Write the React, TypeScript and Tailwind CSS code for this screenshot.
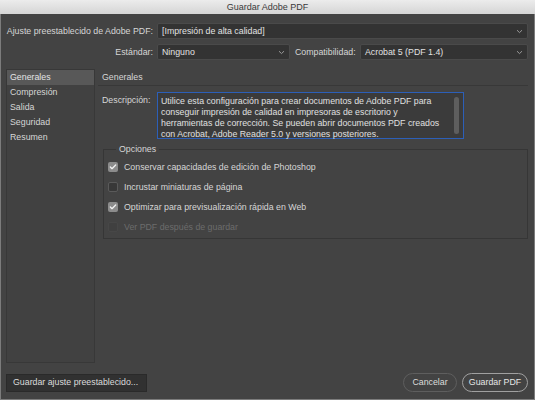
import { Check } from "lucide-react";

const sections = ["Generales", "Compresión", "Salida", "Seguridad", "Resumen"];

const options = [
  { label: "Conservar capacidades de edición de Photoshop", checked: true },
  { label: "Incrustar miniaturas de página", checked: false },
  { label: "Optimizar para previsualización rápida en Web", checked: true },
  { label: "Ver PDF después de guardar", checked: false, disabled: true },
];

function Chevron() {
  return (
    <svg width="7" height="5" viewBox="0 0 7 5" className="shrink-0">
      <path d="M1 1.2 L3.5 3.6 L6 1.2" fill="none" stroke="#9a9a9a" strokeWidth="1" />
    </svg>
  );
}

function Select({ value, className }: { value: string; className: string }) {
  return (
    <div
      className={`flex h-[16px] items-center justify-between rounded-[2px] border border-[#4a4a4a] bg-[#333333] pl-[4px] pr-[4px] text-[#e2e2e2] ${className}`}
    >
      <span>{value}</span>
      <Chevron />
    </div>
  );
}

function CheckBox({ checked, disabled }: { checked: boolean; disabled?: boolean }) {
  if (checked) {
    return (
      <span className="flex h-[10px] w-[10px] items-center justify-center rounded-[2px] bg-[#8c8c8c]">
        <Check size={8} strokeWidth={4} color="#f2f2f2" />
      </span>
    );
  }
  return (
    <span
      className={`h-[10px] w-[10px] rounded-[2px] border ${
        disabled ? "border-[#474747] bg-[#404040]" : "border-[#5a5a5a] bg-[#383838]"
      }`}
    />
  );
}

export default function App() {
  return (
    <div className="flex h-[400px] w-[535px] flex-col bg-[#434343] font-['Liberation_Sans',Arial,sans-serif] text-[8.8px] leading-[11px] text-[#d6d6d6]">
      <div className="flex h-[14px] shrink-0 items-center justify-center bg-gradient-to-b from-[#ececec] to-[#d5d5d5] text-[9px] text-[#3a3a3a]">
        Guardar Adobe PDF
      </div>

      <div className="flex flex-1 flex-col border-x border-b border-[#7c7c7c] pl-[5px] pr-[6px]">
        <div className="mt-[9px] flex items-center">
          <span className="w-[147px] text-right">Ajuste preestablecido de Adobe PDF:</span>
          <Select value="[Impresión de alta calidad]" className="ml-[4px] flex-1" />
        </div>

        <div className="mt-[5px] flex items-center">
          <span className="w-[147px] text-right">Estándar:</span>
          <Select value="Ninguno" className="ml-[4px] w-[133px]" />
          <span className="ml-[5px] w-[62px]">Compatibilidad:</span>
          <Select value="Acrobat 5 (PDF 1.4)" className="ml-[3px] flex-1" />
        </div>

        <div className="mt-[9px] flex h-[294px]">
          <div className="flex w-[89px] flex-col border border-[#383838] bg-[#414141]">
            {sections.map((s, i) => (
              <div
                key={s}
                className={`flex h-[15px] items-center pl-[3px] ${i === 0 ? "bg-[#585858] text-[#e4e4e4]" : ""}`}
              >
                {s}
              </div>
            ))}
          </div>

          <div className="ml-[3px] flex flex-1 flex-col">
            <div className="flex h-[17px] items-center border-b border-[#383838] pl-[4px]">Generales</div>

            <div className="mt-[6px] flex pl-[4px]">
              <span className="w-[55px] pt-[3px]">Descripción:</span>
              <div className="flex h-[47px] w-[307px] border border-[#2c5fb8] bg-[#3b3b3b] py-[3px] pl-[3px] pr-[3px] text-[#e0e0e0]">
                <p className="flex-1 leading-[11px]">
                  Utilice esta configuración para crear documentos de Adobe PDF para conseguir impresión de calidad en
                  impresoras de escritorio y herramientas de corrección. Se pueden abrir documentos PDF creados con
                  Acrobat, Adobe Reader 5.0 y versiones posteriores.
                </p>
                <span className="ml-[4px] mr-[1px] mt-[1px] h-[37px] w-[5px] rounded-full bg-[#5e5e5e]" />
              </div>
            </div>

            <fieldset className="ml-[5px] mt-[5px] border border-[#363636] pb-[1px] pl-[4px]">
              <legend className="ml-[8px] px-[3px] leading-[11px]">Opciones</legend>
              <div className="flex flex-col pt-[2px]">
                {options.map((o) => (
                  <div key={o.label} className="flex h-[20px] items-center">
                    <CheckBox checked={o.checked} disabled={o.disabled} />
                    <span className={`ml-[6px] ${o.disabled ? "text-[#6c6c6c]" : ""}`}>{o.label}</span>
                  </div>
                ))}
              </div>
            </fieldset>
          </div>
        </div>

        <div className="mt-[10px] flex items-center">
          <button className="h-[18px] w-[141px] border border-[#2a2a2a] bg-[#313131] pl-[6px] text-left text-[#dcdcdc]">
            Guardar ajuste preestablecido...
          </button>
          <div className="ml-auto flex gap-[5px]">
            <button className="h-[19px] w-[54px] rounded-full border border-[#5e5e5e] text-[#dcdcdc]">Cancelar</button>
            <button className="h-[19px] w-[66px] rounded-full border border-[#a0a0a0] text-[#e6e6e6]">Guardar PDF</button>
          </div>
        </div>
      </div>
    </div>
  );
}
